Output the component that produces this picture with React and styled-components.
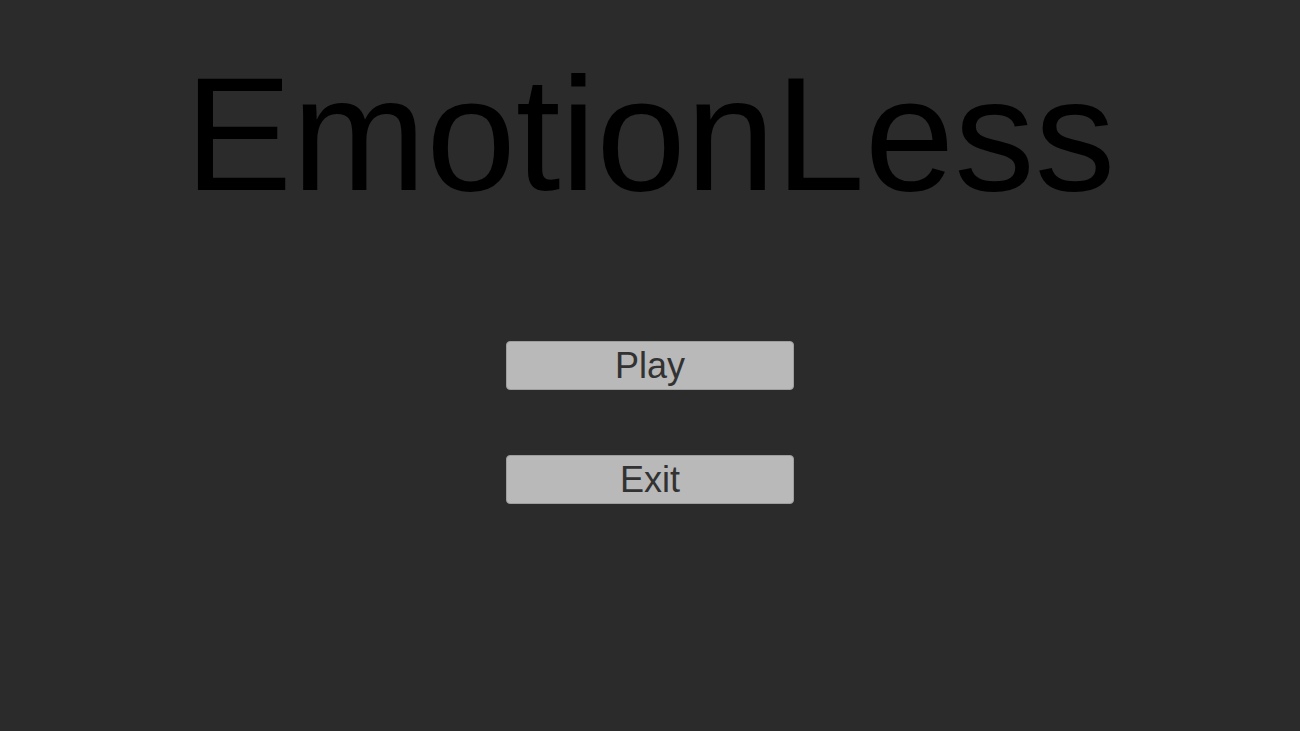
import React from 'react';
import styled, { createGlobalStyle } from 'styled-components';

const GlobalStyle = createGlobalStyle`
  html, body {
    margin: 0;
    padding: 0;
    background: #2b2b2b;
  }
  body {
    font-family: "Liberation Sans", Arial, sans-serif;
  }
`;

const Screen = styled.main`
  width: 100vw;
  height: 100vh;
  display: flex;
  flex-direction: column;
  align-items: center;
  padding-top: 54px;
  box-sizing: border-box;
  background: #2b2b2b;
  overflow: hidden;
`;

const Title = styled.h1`
  margin: 0;
  font-family: "Liberation Sans", Arial, sans-serif;
  font-weight: normal;
  font-size: 161px;
  line-height: 1;
  color: #000;
  white-space: nowrap;
`;

const Menu = styled.nav`
  margin-top: 126px;
  display: flex;
  flex-direction: column;
  gap: 65px;
`;

const MenuButton = styled.button`
  width: 288px;
  height: 49px;
  padding: 0;
  display: flex;
  align-items: center;
  justify-content: center;
  background: #b9b9b9;
  border: 1px solid #9e9e9e;
  border-radius: 4px;
  box-sizing: border-box;
  font-family: "Liberation Sans", Arial, sans-serif;
  font-size: 36px;
  color: #323232;
  cursor: pointer;
  &:hover {
    background: #c4c4c4;
  }
`;

export default function App() {
  return (
    <>
      <GlobalStyle />
      <Screen>
        <Title>EmotionLess</Title>
        <Menu>
          <MenuButton type="button">Play</MenuButton>
          <MenuButton type="button">Exit</MenuButton>
        </Menu>
      </Screen>
    </>
  );
}
